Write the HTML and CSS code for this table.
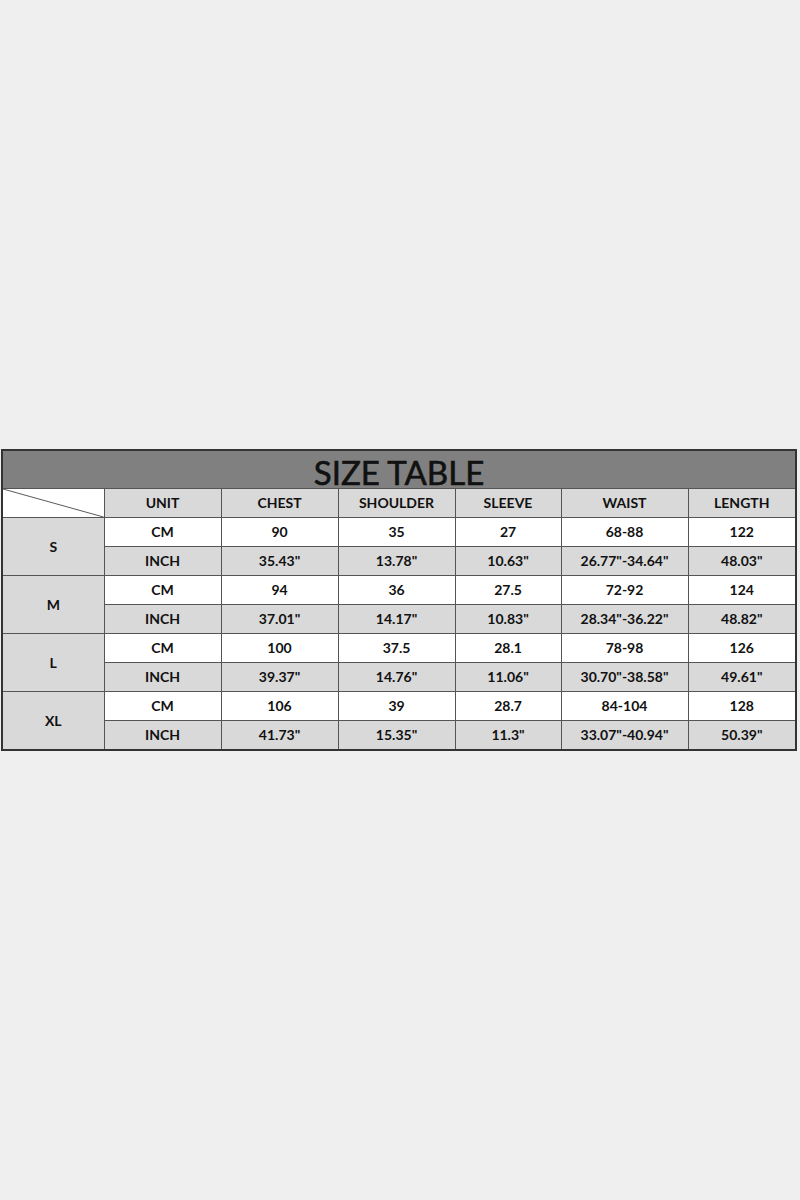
FILE: index.html
```html
<!DOCTYPE html>
<html>
<head>
<meta charset="utf-8">
<link rel="stylesheet" href="styles.css">
</head>
<body>
<div class="page">
  <table class="size-table">
    <colgroup>
      <col class="c-size"><col class="c-unit"><col class="c-chest"><col class="c-shoulder"><col class="c-sleeve"><col class="c-waist"><col class="c-length">
    </colgroup>
    <tr class="title-row"><td colspan="7" class="title">SIZE TABLE</td></tr>
    <tr class="head-row">
      <td class="corner"><svg class="diag" viewBox="0 0 100 28" preserveAspectRatio="none"><line x1="0" y1="0" x2="100" y2="28" stroke="#5a5a5a" stroke-width="1" vector-effect="non-scaling-stroke"/></svg></td>
      <td class="gray">UNIT</td><td class="gray">CHEST</td><td class="gray">SHOULDER</td><td class="gray">SLEEVE</td><td class="gray">WAIST</td><td class="gray">LENGTH</td>
    </tr>
    <tr class="row"><td rowspan="2" class="gray size">S</td><td>CM</td><td>90</td><td>35</td><td>27</td><td>68-88</td><td>122</td></tr>
    <tr class="row gray-row"><td>INCH</td><td>35.43"</td><td>13.78"</td><td>10.63"</td><td>26.77"-34.64"</td><td>48.03"</td></tr>
    <tr class="row"><td rowspan="2" class="gray size">M</td><td>CM</td><td>94</td><td>36</td><td>27.5</td><td>72-92</td><td>124</td></tr>
    <tr class="row gray-row"><td>INCH</td><td>37.01"</td><td>14.17"</td><td>10.83"</td><td>28.34"-36.22"</td><td>48.82"</td></tr>
    <tr class="row"><td rowspan="2" class="gray size">L</td><td>CM</td><td>100</td><td>37.5</td><td>28.1</td><td>78-98</td><td>126</td></tr>
    <tr class="row gray-row"><td>INCH</td><td>39.37"</td><td>14.76"</td><td>11.06"</td><td>30.70"-38.58"</td><td>49.61"</td></tr>
    <tr class="row"><td rowspan="2" class="gray size">XL</td><td>CM</td><td>106</td><td>39</td><td>28.7</td><td>84-104</td><td>128</td></tr>
    <tr class="row gray-row"><td>INCH</td><td>41.73"</td><td>15.35"</td><td>11.3"</td><td>33.07"-40.94"</td><td>50.39"</td></tr>
  </table>
</div>
</body>
</html>
```
FILE: styles.css
```css
html, body {
  margin: 0;
  padding: 0;
  background: #efefef;
}
.page {
  height: 1200px;
  display: flex;
  align-items: center;
  padding-left: 1px;
}
.size-table {
  width: 794px;
  table-layout: fixed;
  border-collapse: collapse;
  border: 2px solid #333;
  font-family: "Lato", "Open Sans", sans-serif;
  font-weight: 700;
  font-size: 14px;
  color: #111;
  background: #fff;
}
.c-size { width: 102px; }
.c-unit { width: 117px; }
.c-chest { width: 117px; }
.c-shoulder { width: 117px; }
.c-sleeve { width: 106px; }
.c-waist { width: 127px; }
.c-length { width: 108px; }
.size-table td {
  border: 1px solid #555;
  text-align: center;
  vertical-align: middle;
  padding: 0;
  height: 28px;
  line-height: 16px;
}
.title-row td.title {
  background: #808080;
  font-weight: 400;
  font-size: 33px;
  color: #111;
  -webkit-text-stroke: 0.6px #111;
  padding-top: 5px;
  height: 32px;
  line-height: 32px;
}
.gray, .gray-row td {
  background: #d9d9d9;
}
.corner {
  position: relative;
  background: #fff;
}
.diag {
  position: absolute;
  left: 0;
  top: 0;
  width: 100%;
  height: 100%;
  display: block;
}
```
